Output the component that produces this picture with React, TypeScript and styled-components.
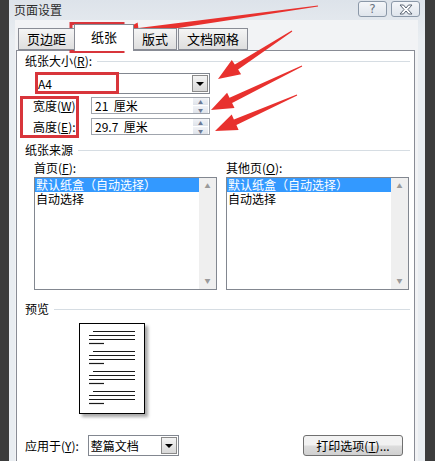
import React from 'react'
import styled, { createGlobalStyle } from 'styled-components'

const GlobalStyle = createGlobalStyle`
  html, body { margin: 0; padding: 0; background: #3c3c3c; }
  body {
    font-family: "Noto Sans CJK SC", "DejaVu Sans", sans-serif;
    font-size: 12px;
    color: #000;
  }
`

type Pt = [number, number]

const arrowPoints = (tail: Pt, tip: Pt, w1: number, w2: number, len: number, head: number) => {
  const dx = tip[0] - tail[0]
  const dy = tip[1] - tail[1]
  const d = Math.hypot(dx, dy)
  const ux = dx / d
  const uy = dy / d
  const nx = -uy
  const ny = ux
  const bx = tip[0] - ux * len
  const by = tip[1] - uy * len
  const p = (x: number, y: number, n: number) => `${(x + nx * n).toFixed(1)},${(y + ny * n).toFixed(1)}`
  return [
    p(tail[0], tail[1], w1 / 2),
    p(bx, by, w2 / 2),
    p(bx, by, head / 2),
    `${tip[0]},${tip[1]}`,
    p(bx, by, -head / 2),
    p(bx, by, -w2 / 2),
    p(tail[0], tail[1], -w1 / 2),
  ].join(' ')
}

const arrows: { tail: Pt; tip: Pt }[] = [
  { tail: [318, 6], tip: [117, 34] },
  { tail: [292, 31], tip: [218, 79] },
  { tail: [302, 66], tip: [211, 110] },
  { tail: [297, 95], tip: [215, 131] },
]

const App = () => {
  return (
    <Screen>
      <GlobalStyle />
      <Window>
        <TitleBar>
          <Title>页面设置</Title>
          <CapButton>?</CapButton>
          <CapButton>
            <svg width="14" height="11" viewBox="0 0 14 11">
              <path
                d="M1 1 H4.5 L7 4 L9.5 1 H13 L9 5.5 L13 10 H9.5 L7 7 L4.5 10 H1 L5 5.5 Z"
                fill="#fff"
                stroke="#5b6573"
                strokeWidth="1"
              />
            </svg>
          </CapButton>
        </TitleBar>
        <Client>
          <TabRow>
            <Tab>页边距</Tab>
            <Tab $active>纸张</Tab>
            <Tab>版式</Tab>
            <Tab>文档网格</Tab>
          </TabRow>
          <Panel>
            <Section>
              <span>纸张大小(<u>R</u>):</span>
              <Rule />
            </Section>
            <SelectBox $width={175} $indent={10} $top={5}>
              <SelectText>A4</SelectText>
              <DropButton />
            </SelectBox>
            <FieldRow $top={3}>
              <FieldLabel>宽度(<u>W</u>):</FieldLabel>
              <Input>
                <InputText>21&nbsp; 厘米</InputText>
                <Spinner>
                  <SpinHalf>▲</SpinHalf>
                  <SpinHalf>▼</SpinHalf>
                </Spinner>
              </Input>
            </FieldRow>
            <FieldRow $top={4}>
              <FieldLabel>高度(<u>E</u>):</FieldLabel>
              <Input>
                <InputText>29.7&nbsp; 厘米</InputText>
                <Spinner>
                  <SpinHalf>▲</SpinHalf>
                  <SpinHalf>▼</SpinHalf>
                </Spinner>
              </Input>
            </FieldRow>
            <Section $top={8}>
              <span>纸张来源</span>
              <Rule />
            </Section>
            <ListGrid>
              <ListLabel>首页(<u>F</u>):</ListLabel>
              <ListLabel>其他页(<u>O</u>):</ListLabel>
              <ListBox>
                <ListItems>
                  <ListItem $selected>默认纸盒（自动选择）</ListItem>
                  <ListItem>自动选择</ListItem>
                </ListItems>
                <ScrollBar>
                  <ScrollArrow>▲</ScrollArrow>
                  <ScrollArrow>▼</ScrollArrow>
                </ScrollBar>
              </ListBox>
              <ListBox>
                <ListItems>
                  <ListItem $selected>默认纸盒（自动选择）</ListItem>
                  <ListItem>自动选择</ListItem>
                </ListItems>
                <ScrollBar>
                  <ScrollArrow>▲</ScrollArrow>
                  <ScrollArrow>▼</ScrollArrow>
                </ScrollBar>
              </ListBox>
            </ListGrid>
            <Section $top={12}>
              <span>预览</span>
              <Rule />
            </Section>
            <PreviewPage>
              <svg width="66" height="91" viewBox="0 0 66 91">
                {[0, 1, 2, 3].map((g) => (
                  <g key={g} transform={`translate(0 ${g * 20})`} stroke="#1a1a1a" strokeWidth="1.2">
                    <line x1="14" y1="8.5" x2="56" y2="8.5" />
                    <line x1="10" y1="12.5" x2="56" y2="12.5" />
                    <line x1="10" y1="16.5" x2="56" y2="16.5" />
                    <line x1="10" y1="20.5" x2="25" y2="20.5" />
                  </g>
                ))}
              </svg>
            </PreviewPage>
            <BottomRow>
              <span>应用于(<u>Y</u>):</span>
              <SelectBox $width={91} $indent={0} $top={0}>
                <SelectText>整篇文档</SelectText>
                <DropButton />
              </SelectBox>
              <PushButton>打印选项(<u>T</u>)...</PushButton>
            </BottomRow>
          </Panel>
        </Client>
      </Window>
      <Overlay width="435" height="461" viewBox="0 0 435 461">
        <g fill="none" stroke="#d8353b" strokeWidth="3">
          <rect x="71" y="23.5" width="52" height="28" />
          <rect x="36.5" y="73.5" width="81" height="19" />
          <rect x="21.5" y="97.5" width="56" height="39" />
        </g>
        {arrows.map((a, i) => (
          <polygon key={i} points={arrowPoints(a.tail, a.tip, 1, 6, 22, 17)} fill="#e8312e" />
        ))}
      </Overlay>
    </Screen>
  )
}

const Screen = styled.div`
  position: relative;
  width: 435px;
  height: 461px;
  overflow: hidden;
  padding-left: 9px;
  box-sizing: border-box;
  display: flex;
`
const Window = styled.div`
  width: 416px;
  height: 480px;
  background: linear-gradient(#dde3ea, #e9edf1 40px);
  display: flex;
  flex-direction: column;
`
const TitleBar = styled.div`
  height: 20px;
  display: flex;
  align-items: flex-start;
  gap: 4px;
  padding: 1px 5px 0 5px;
  box-sizing: border-box;
`
const Title = styled.div`
  flex: 1;
  font-size: 12px;
  line-height: 18px;
  color: #2b2b2b;
`
const CapButton = styled.div`
  width: 29px;
  height: 16px;
  box-sizing: border-box;
  border: 1px solid #8b98a8;
  border-radius: 3px;
  background: linear-gradient(#f4f6f9, #dfe5ec);
  display: flex;
  align-items: center;
  justify-content: center;
  font-family: "DejaVu Sans", sans-serif;
  font-size: 12px;
  color: #6a7380;
`
const Client = styled.div`
  flex: 1;
  margin: 0 7px 0 6px;
  background: #f2f3f5;
  padding: 4px 3px 0 1px;
  display: flex;
  flex-direction: column;
`
const TabRow = styled.div`
  height: 26px;
  display: flex;
  align-items: flex-end;
  padding-left: 2px;
  gap: 1px;
`
const Tab = styled.div<{ $active?: boolean }>`
  position: relative;
  z-index: ${(p) => (p.$active ? 2 : 1)};
  height: ${(p) => (p.$active ? 27 : 22)}px;
  margin: ${(p) => (p.$active ? '0 -2px -1px' : '0')};
  padding: 0 ${(p) => (p.$active ? 16 : 8)}px;
  box-sizing: border-box;
  border: 1px solid #898c95;
  border-bottom: ${(p) => (p.$active ? 'none' : '1px solid #898c95')};
  background: ${(p) => (p.$active ? '#fff' : 'linear-gradient(#f5f5f5, #dedede)')};
  font-size: 13px;
  line-height: ${(p) => (p.$active ? 24 : 20)}px;
  display: flex;
  justify-content: center;
`
const Panel = styled.div`
  flex: 1;
  background: #fff;
  border: 1px solid #898c95;
  padding: 3px 4px 0 8px;
  display: flex;
  flex-direction: column;
`
const Section = styled.div<{ $top?: number }>`
  display: flex;
  align-items: center;
  gap: 5px;
  height: 14px;
  line-height: 14px;
  margin-top: ${(p) => p.$top ?? 0}px;
  white-space: nowrap;
`
const Rule = styled.div`
  flex: 1;
  height: 1px;
  background: #d6dde3;
`
const SelectBox = styled.div<{ $width: number; $indent: number; $top: number }>`
  width: ${(p) => p.$width}px;
  height: 21px;
  margin-left: ${(p) => p.$indent}px;
  margin-top: ${(p) => p.$top}px;
  box-sizing: border-box;
  border: 1px solid #828790;
  background: #fff;
  display: flex;
  align-items: center;
  padding: 0 1px 0 2px;
`
const SelectText = styled.div`
  flex: 1;
  font-size: 12px;
`
const DropButton = styled.div`
  width: 16px;
  height: 17px;
  box-sizing: border-box;
  border: 1px solid #8a8a8a;
  background: linear-gradient(#f4f4f4, #d8d8d8);
  display: flex;
  align-items: center;
  justify-content: center;
  &::after {
    content: '';
    border-left: 4px solid transparent;
    border-right: 4px solid transparent;
    border-top: 4px solid #000;
  }
`
const FieldRow = styled.div<{ $top: number }>`
  display: flex;
  align-items: center;
  margin-top: ${(p) => p.$top}px;
  padding-left: 8px;
`
const FieldLabel = styled.div`
  width: 58px;
  font-size: 12px;
`
const Input = styled.div`
  width: 119px;
  height: 17px;
  box-sizing: border-box;
  border: 1px solid #a0a5ad;
  display: flex;
  align-items: center;
  padding: 0 1px 0 3px;
`
const InputText = styled.div`
  flex: 1;
  font-size: 12px;
`
const Spinner = styled.div`
  width: 15px;
  height: 15px;
  display: flex;
  flex-direction: column;
  gap: 1px;
`
const SpinHalf = styled.div`
  flex: 1;
  background: linear-gradient(#f1f3f7, #dfe3ea);
  color: #6b7a95;
  font-size: 5px;
  line-height: 7px;
  text-align: center;
`
const ListGrid = styled.div`
  display: grid;
  grid-template-columns: 183px 183px;
  column-gap: 9px;
  row-gap: 2px;
  margin-top: 4px;
  padding-left: 9px;
`
const ListLabel = styled.div`
  height: 14px;
  line-height: 14px;
`
const ListBox = styled.div`
  height: 113px;
  box-sizing: border-box;
  border: 1px solid #828790;
  display: flex;
`
const ListItems = styled.div`
  flex: 1;
  min-width: 0;
  display: flex;
  flex-direction: column;
`
const ListItem = styled.div<{ $selected?: boolean }>`
  height: 14px;
  line-height: 14px;
  font-size: 12px;
  padding-left: 1px;
  white-space: nowrap;
  background: ${(p) => (p.$selected ? '#3399ff' : 'transparent')};
  color: ${(p) => (p.$selected ? '#fff' : '#000')};
`
const ScrollBar = styled.div`
  width: 17px;
  background: #efefef;
  display: flex;
  flex-direction: column;
  justify-content: space-between;
  padding: 4px 0;
`
const ScrollArrow = styled.div`
  font-size: 6px;
  line-height: 8px;
  color: #9a9a9a;
  text-align: center;
`
const PreviewPage = styled.div`
  width: 66px;
  height: 91px;
  margin: 7px 0 0 54px;
  box-sizing: border-box;
  border: 1px solid #000;
  background: #fff;
  box-shadow: 3px 3px 3px rgba(0, 0, 0, 0.35);
  display: flex;
  svg { display: block; margin: -1px; }
`
const BottomRow = styled.div`
  display: flex;
  align-items: center;
  gap: 9px;
  margin-top: 21px;
  padding-right: 7px;
`
const PushButton = styled.div`
  margin-left: auto;
  width: 100px;
  height: 21px;
  box-sizing: border-box;
  border: 1px solid #707070;
  border-radius: 3px;
  background: linear-gradient(#f2f2f2 45%, #dcdcdc 55%, #d0d0d0);
  display: flex;
  align-items: center;
  justify-content: center;
  font-size: 12px;
`
const Overlay = styled.svg`
  position: absolute;
  left: 0;
  top: 0;
  pointer-events: none;
`

export default App
